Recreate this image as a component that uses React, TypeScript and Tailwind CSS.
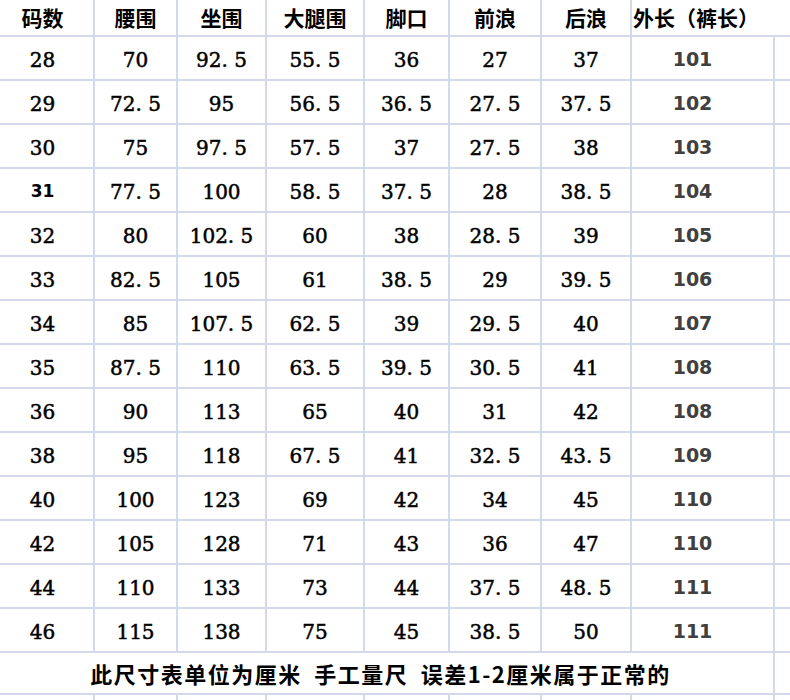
import React from "react";

const widths = [95, 83, 89, 98, 85, 92, 90, 143, 15];
const headers = ["码数", "腰围", "坐围", "大腿围", "脚口", "前浪", "后浪", "外长（裤长）"];
const rows: string[][] = [
  ["28", "70", "92. 5", "55. 5", "36", "27", "37", "101"],
  ["29", "72. 5", "95", "56. 5", "36. 5", "27. 5", "37. 5", "102"],
  ["30", "75", "97. 5", "57. 5", "37", "27. 5", "38", "103"],
  ["31", "77. 5", "100", "58. 5", "37. 5", "28", "38. 5", "104"],
  ["32", "80", "102. 5", "60", "38", "28. 5", "39", "105"],
  ["33", "82. 5", "105", "61", "38. 5", "29", "39. 5", "106"],
  ["34", "85", "107. 5", "62. 5", "39", "29. 5", "40", "107"],
  ["35", "87. 5", "110", "63. 5", "39. 5", "30. 5", "41", "108"],
  ["36", "90", "113", "65", "40", "31", "42", "108"],
  ["38", "95", "118", "67. 5", "41", "32. 5", "43. 5", "109"],
  ["40", "100", "123", "69", "42", "34", "45", "110"],
  ["42", "105", "128", "71", "43", "36", "47", "110"],
  ["44", "110", "133", "73", "44", "37. 5", "48. 5", "111"],
  ["46", "115", "138", "75", "45", "38. 5", "50", "111"],
];

export default function App() {
  return (
    <div className="w-[790px] h-[700px] overflow-hidden bg-white text-black">
      {/* header */}
      <div className="flex h-[37px] border-b-2 border-[#d3d9eb]">
        {headers.map((h, i) => (
          <div
            key={i}
            style={{ width: widths[i] }}
            className={
              "flex items-center text-[21px] font-bold leading-none font-['Noto_Sans_CJK_SC',sans-serif] " +
              (i === 7 ? "justify-start pl-[1px] whitespace-nowrap" : "justify-center border-r-2 border-[#d3d9eb]") +
              (i === 0 ? " pr-2" : "")
            }
          >
            {h}
          </div>
        ))}
        <div style={{ width: widths[8] }} />
      </div>
      {rows.map((r, ri) => (
        <div key={ri} className="flex h-[44px] border-b-2 border-[#d3d9eb]">
          {r.map((c, ci) => {
            let cls = "flex items-center justify-center border-r-2 border-[#d3d9eb] whitespace-nowrap pt-[3px] ";
            if (ci === 7) {
              cls += "pr-[20px] text-[19px] font-bold text-[#404040] font-['DejaVu_Sans',sans-serif]";
            } else if (ci === 0 && c === "31") {
              cls += "pr-2 text-[17px] font-bold font-['DejaVu_Sans',sans-serif]";
            } else {
              cls +=
                "text-[20px] font-normal font-['DejaVu_Serif',serif] [-webkit-text-stroke:0.5px_#000]" +
                (ci === 0 ? " pr-2" : "");
            }
            return (
              <div key={ci} style={{ width: widths[ci] }} className={cls}>
                {c}
              </div>
            );
          })}
          <div style={{ width: widths[8] }} />
        </div>
      ))}
      {/* footer */}
      <div className="flex h-[42px] border-b-2 border-[#d3d9eb]">
        <div className="w-[775px] flex items-center justify-center border-r-2 border-[#d3d9eb] text-[22px] font-bold tracking-[1.5px] whitespace-nowrap font-['Noto_Sans_CJK_SC',sans-serif] pr-3">
          此尺寸表单位为厘米{"\u2002"}手工量尺{"\u2002"}误差1-2厘米属于正常的
        </div>
        <div className="w-[15px]" />
      </div>
      <div className="flex h-[20px]">
        {widths.slice(0, 8).map((w, i) => (
          <div key={i} style={{ width: w }} className="border-r-2 border-[#d3d9eb]" />
        ))}
      </div>
    </div>
  );
}
